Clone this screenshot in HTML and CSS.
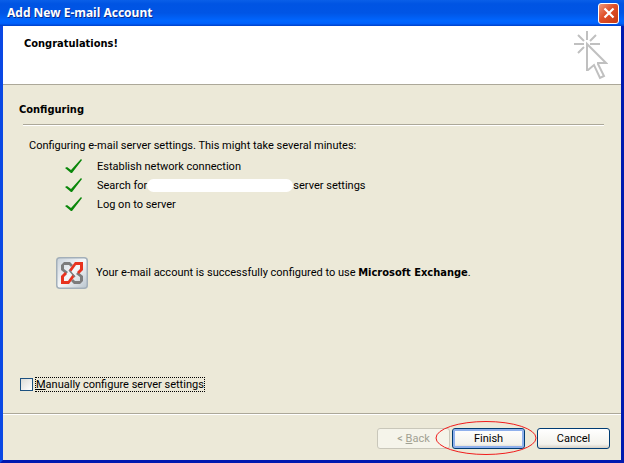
FILE: index.html
```html
<!DOCTYPE html>
<html lang="en">
<head>
<meta charset="utf-8">
<title>Add New E-mail Account</title>
<link rel="stylesheet" href="styles.css">
</head>
<body>
<div class="window">
  <header class="titlebar">
    <h1 class="title">Add New E-mail Account</h1>
    <button class="close" type="button" aria-label="Close">
      <svg width="12" height="12" viewBox="0 0 12 12"><path d="M1.500 1.500l9 9M10.500 1.500l-9 9" stroke="#fff" stroke-width="2.200" fill="none"/></svg>
    </button>
  </header>
  <section class="banner">
    <h2 class="heading">Congratulations!</h2>
    <svg class="wizard" width="36" height="52" viewBox="0 0 36 52" fill="none" stroke="#c0c0c0" stroke-width="2">
      <path d="M15 1v9M2 14h10M18 14h10M6 5l6 6M24 5l-6 6M6 23l6-6"/>
      <path d="M15 14v26h1l6-5 6 13 4-2-6-12v-1h8z"/>
    </svg>
  </section>
  <main class="content">
    <h2 class="heading section">Configuring</h2>
    <hr class="rule">
    <p class="intro">Configuring e-mail server settings. This might take several minutes:</p>
    <ul class="steps">
      <li class="step"><svg class="tick" width="18" height="15" viewBox="0 0 18 15"><path d="M0 9l2-1 4 3L16 0l1 1L7 14H6z" fill="#0a870a"/></svg><span>Establish network connection</span></li>
      <li class="step"><svg class="tick" width="18" height="15" viewBox="0 0 18 15"><path d="M0 9l2-1 4 3L16 0l1 1L7 14H6z" fill="#0a870a"/></svg><span class="before">Search for</span><span class="blank"></span><span>server settings</span></li>
      <li class="step"><svg class="tick" width="18" height="15" viewBox="0 0 18 15"><path d="M0 9l2-1 4 3L16 0l1 1L7 14H6z" fill="#0a870a"/></svg><span>Log on to server</span></li>
    </ul>
    <div class="result">
      <svg width="32" height="32" viewBox="0 0 32 32">
        <defs><linearGradient id="tile" x1="0" y1="0" x2="1" y2="1"><stop offset="0" stop-color="#c9d2da"/><stop offset=".5" stop-color="#f5f7f9"/><stop offset="1" stop-color="#b9c4cd"/></linearGradient></defs>
        <rect x=".75" y=".75" width="30.500" height="30.500" rx="3" fill="url(#tile)" stroke="#a3afb9" stroke-width="1.500"/>
        <path d="M5 8l3-3h6l3 3-2 2-2-2H8v4l4 3-2 2-5-4zM27 24l-3 3h-6l-3-3 2-2 2 2h5v-4l-4-3 2-2 5 4z" fill="#7c7c7c"/>
        <path d="M19 5h8v8l-4 4-2-2 3-3V8h-4l-5 7-2-2zM13 27H5v-8l4-4 2 2-3 3v4h4l5-7 2 2z" fill="#e8331f"/>
        <path d="M13 13l6 7" stroke="#7c7c7c" stroke-width="1.500"/>
      </svg>
      <p class="message">Your e-mail account is successfully configured to use <b>Microsoft Exchange</b>.</p>
    </div>
    <div class="option">
      <input class="check" type="checkbox" id="manual">
      <label class="check-label" for="manual"><u>M</u>anually configure server settings</label>
    </div>
  </main>
  <footer class="actions">
    <button class="btn" type="button" disabled>&lt; <u>B</u>ack</button>
    <span class="marked">
      <button class="btn primary" type="button">Finish</button>
      <svg class="ring" width="102" height="36" viewBox="0 0 102 36"><ellipse cx="51" cy="18" rx="50" ry="16.500" fill="none" stroke="#f01c1c"/></svg>
    </span>
    <button class="btn cancel" type="button">Cancel</button>
  </footer>
</div>
</body>
</html>
```

FILE: styles.css
```css
* { box-sizing: border-box; }
body, h1, h2, p, ul { margin: 0; padding: 0; }
body {
  background: #0831d9;
  color: #000;
  font: 11px/16px Roboto, sans-serif;
}
.window {
  display: flex;
  flex-direction: column;
  min-height: 100vh;
  border: solid #0831d9;
  border-width: 0 3px 3px;
  border-color: #0a48e4 #0019b0 #0019b0 #0a48e4;
  background: #ece9d8;
}
.titlebar {
  display: flex;
  align-items: center;
  justify-content: space-between;
  height: 26px;
  margin: 0 -3px;
  padding: 0 5px 0 7px;
  background: linear-gradient(#0a5fe8, #0054e3 15%, #0055e5 50%, #0066ff 80%, #0061fc 90%, #0040c8);
}
.title {
  color: #fff;
  font: bold 12px/16px "Noto Sans", sans-serif;
  text-shadow: 1px 1px #0a2a8c;
}
.close {
  display: grid;
  place-items: center;
  width: 21px;
  height: 21px;
  padding: 0;
  border: 1px solid #fff;
  border-radius: 3px;
  background: linear-gradient(135deg, #f0997c, #df4f28 45%, #c63a15);
}
.banner {
  display: flex;
  justify-content: space-between;
  height: 59px;
  padding: 4px 13px 0 21px;
  border-bottom: 1px solid #aca899;
  background: #fff;
}
.heading, b { font-family: "DejaVu Sans Condensed", "DejaVu Sans", sans-serif; }
.heading { font-size: 11px; line-height: 16px; }
.banner .heading { padding-top: 6px; }
.content {
  display: flex;
  flex: 1;
  flex-direction: column;
  padding: 17px 16px 21px;
}
.rule {
  width: auto;
  height: 2px;
  margin: 6px 1px 12px 4px;
  border: 0;
  border-top: 1px solid #aca899;
  border-bottom: 1px solid #fff;
}
.intro { padding-left: 10px; }
.steps {
  padding: 3px 0 0 46px;
  list-style: none;
}
.step {
  display: flex;
  align-items: center;
  height: 19px;
  white-space: nowrap;
}
.tick { margin-right: 14px; }
.before { min-width: 50px; }
.blank {
  width: 146px;
  height: 13px;
  border-radius: 7px;
  background: #fff;
}
.result {
  display: flex;
  align-items: center;
  gap: 8px;
  margin: 43px 0 0 37px;
}
.option {
  display: flex;
  align-items: center;
  gap: 2px;
  margin-top: auto;
}
.check {
  width: 13px;
  height: 13px;
  margin: 0 0 0 1px;
  appearance: none;
  border: 1px solid #1c5180;
  background: linear-gradient(135deg, #dcdcd7, #fff);
}
.check-label {
  border: 1px dotted #000;
  line-height: 13px;
}
.actions {
  display: flex;
  justify-content: flex-end;
  height: 47px;
  padding: 14px 11px 0;
  border-top: 1px solid #aca899;
  box-shadow: inset 0 1px #fff;
}
.btn {
  width: 73px;
  height: 21px;
  padding: 0;
  border: 1px solid #003c74;
  border-radius: 3px;
  background: linear-gradient(#fff, #f3f2ec 80%, #d6d0c5);
  color: #000;
  font: inherit;
}
.btn:disabled {
  border-color: #c9c7ba;
  background: #f5f4ea;
  color: #a1a192;
}
.primary { box-shadow: inset 0 0 0 2px #8fb0ec; }
.marked {
  position: relative;
  height: 21px;
  margin: 0 12px 0 2px;
}
.ring {
  position: absolute;
  top: -8px;
  left: -17px;
  pointer-events: none;
}
```
